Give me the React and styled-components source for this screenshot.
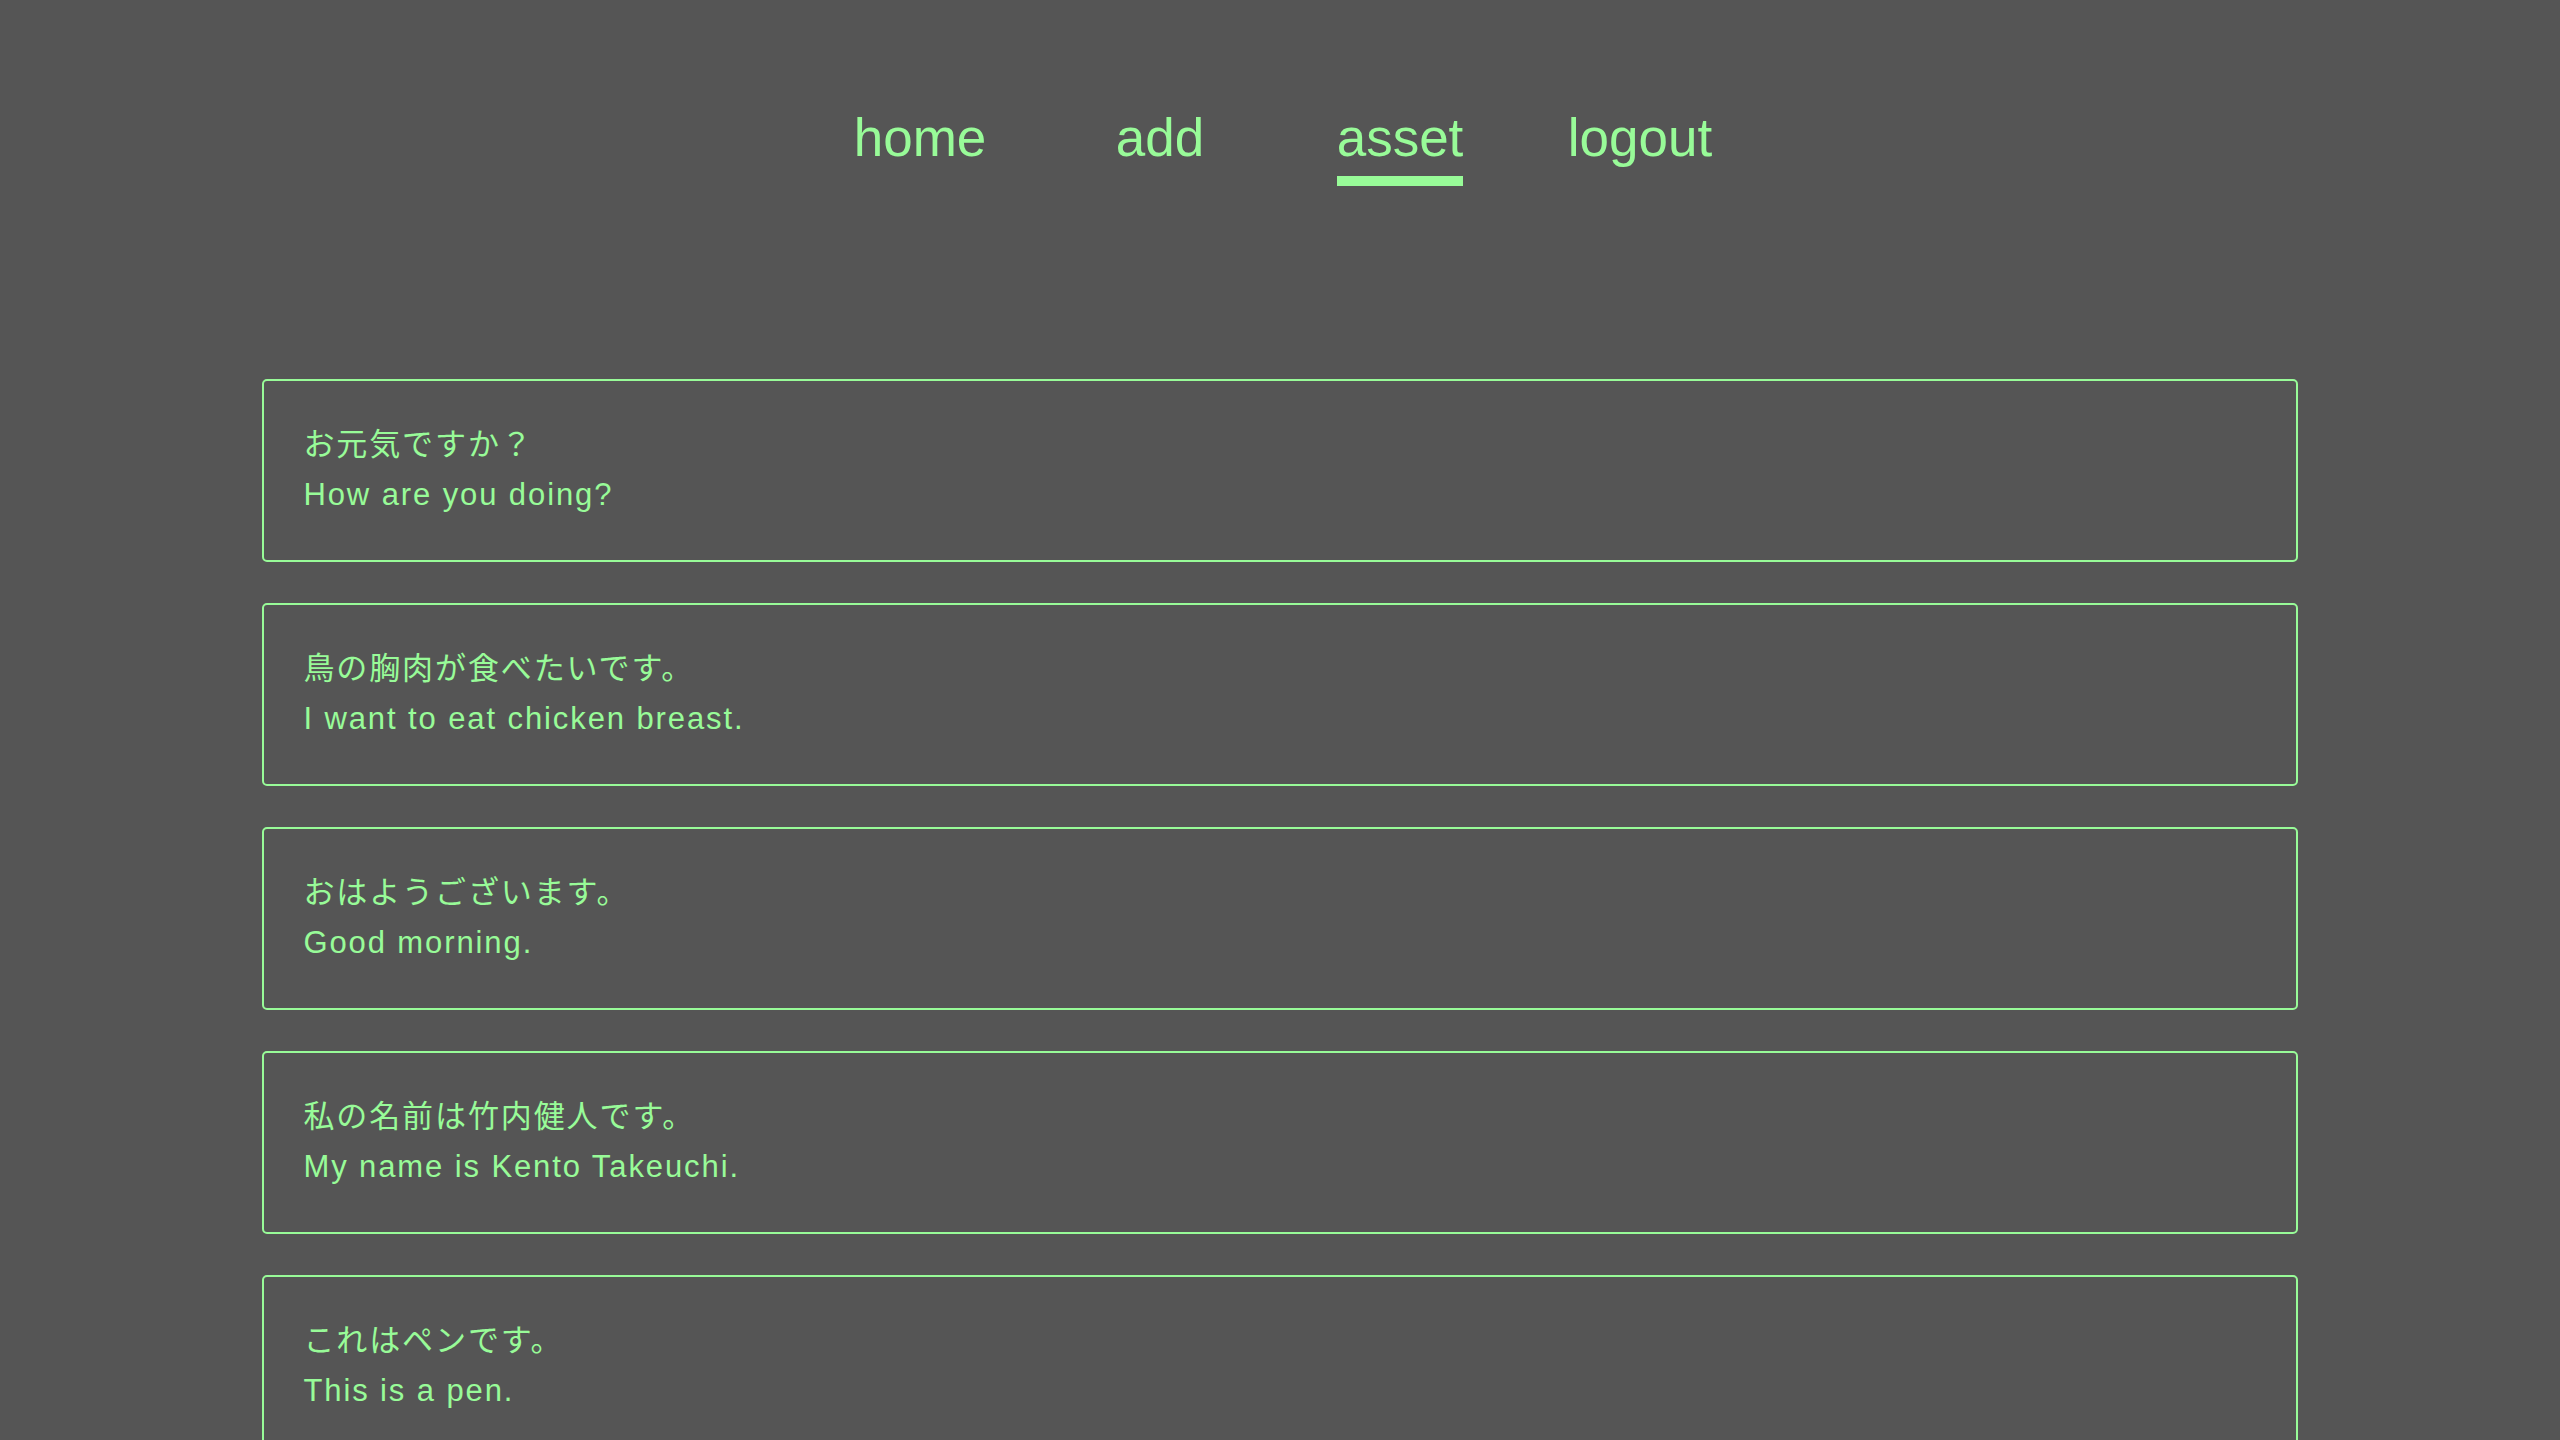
import React from "react";
import styled, { createGlobalStyle } from "styled-components";

const phrases = [
	{ ja: "お元気ですか？", en: "How are you doing?" },
	{ ja: "鳥の胸肉が食べたいです。", en: "I want to eat chicken breast." },
	{ ja: "おはようございます。", en: "Good morning." },
	{ ja: "私の名前は竹内健人です。", en: "My name is Kento Takeuchi." },
	{ ja: "これはペンです。", en: "This is a pen." },
];

const links = ["home", "add", "asset", "logout"];

const App = () => {
	const [selected, setSelected] = React.useState("asset");

	return (
		<>
			<GlobalStyle />
			<Nav>
				{links.map((link) => (
					<NavItem key={link}>
						<NavLink
							$active={selected === link}
							onClick={() => setSelected(link)}
						>
							{link}
						</NavLink>
					</NavItem>
				))}
			</Nav>
			<List>
				{phrases.map((phrase) => (
					<Card key={phrase.en}>
						<Line lang="ja">{phrase.ja}</Line>
						<Line lang="en">{phrase.en}</Line>
					</Card>
				))}
			</List>
		</>
	);
};

const GlobalStyle = createGlobalStyle`
	html, body {
		background: #555555;
		min-height: 100%;
	}
	body {
		margin: 8px;
		color: #98fb98;
		font-family: "Liberation Sans", "Noto Sans CJK JP", sans-serif;
	}
`;

const Nav = styled.nav`
	display: flex;
	justify-content: center;
	padding-top: 100px;
`;

const NavItem = styled.div`
	width: 240px;
	text-align: center;
`;

const NavLink = styled.span`
	display: inline-block;
	cursor: pointer;
	font-size: 53px;
	line-height: 60px;
	padding-bottom: 8px;
	border-bottom: 10px solid ${({ $active }) => ($active ? "#98fb98" : "transparent")};
`;

const List = styled.div`
	width: 80%;
	margin: 193px auto 0;
`;

const Card = styled.div`
	border: 2px solid #98fb98;
	border-radius: 5px;
	padding: 39px 39px 40px;
	margin-bottom: 41px;
`;

const Line = styled.p`
	margin: 0;
	font-size: 31px;
	line-height: 50px;
	letter-spacing: 1.9px;
`;

export default App;
